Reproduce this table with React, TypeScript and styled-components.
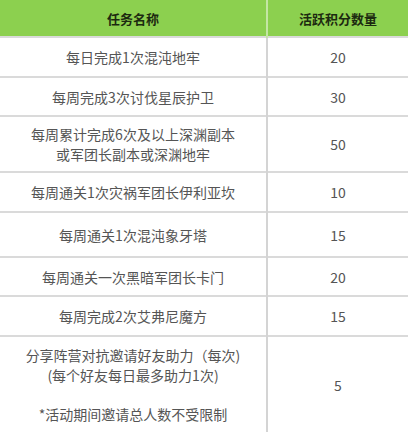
import React from 'react';
import styled, { createGlobalStyle } from 'styled-components';

const GlobalStyle = createGlobalStyle`
  html, body {
    margin: 0;
    padding: 0;
    background: #ffffff;
  }
  body {
    font-family: "Noto Sans CJK SC", "Noto Sans", sans-serif;
  }
`;

const Table = styled.table`
  width: 408px;
  border-collapse: collapse;
  table-layout: fixed;
`;

const HeadCell = styled.th`
  height: 36px;
  padding: 0;
  background: #8cd04f;
  color: #1c2a10;
  font-size: 13px;
  font-weight: 700;
  text-align: center;
  vertical-align: middle;
  border-right: 2px solid #c4e6a4;

  &:last-child {
    border-right: none;
  }
`;

const Row = styled.tr`
  border-top: 2px solid #dadada;
`;

const Cell = styled.td<{ $h?: number }>`
  height: ${(p) => p.$h ?? 40}px;
  padding: 7px 6px;
  box-sizing: border-box;
  color: #555555;
  font-size: 14px;
  line-height: 20px;
  text-align: center;
  vertical-align: middle;
  border-right: 2px solid #d4d4d4;

  &:last-child {
    border-right: none;
  }
`;

const Note = styled.div`
  margin-top: 19px;
`;

interface Task {
  name: React.ReactNode;
  points: number;
  h?: number;
}

const tasks: Task[] = [
  { name: '每日完成1次混沌地牢', points: 20, h: 40 },
  { name: '每周完成3次讨伐星辰护卫', points: 30, h: 39 },
  {
    name: (
      <>
        每周累计完成6次及以上深渊副本
        <br />
        或军团长副本或深渊地牢
      </>
    ),
    points: 50,
    h: 54,
  },
  { name: '每周通关1次灾祸军团长伊利亚坎', points: 10, h: 40 },
  { name: '每周通关1次混沌象牙塔', points: 15, h: 45 },
  { name: '每周通关一次黑暗军团长卡门', points: 20, h: 39 },
  { name: '每周完成2次艾弗尼魔方', points: 15, h: 40 },
  {
    name: (
      <>
        分享阵营对抗邀请好友助力（每次)
        <br />
        (每个好友每日最多助力1次)
        <Note>*活动期间邀请总人数不受限制</Note>
      </>
    ),
    points: 5,
    h: 96,
  },
];

const App: React.FC = () => {
  return (
    <>
      <GlobalStyle />
      <Table>
        <colgroup>
          <col style={{ width: 267 }} />
          <col />
        </colgroup>
        <thead>
          <tr>
            <HeadCell>任务名称</HeadCell>
            <HeadCell>活跃积分数量</HeadCell>
          </tr>
        </thead>
        <tbody>
          {tasks.map((t, i) => (
            <Row key={i}>
              <Cell $h={t.h}>{t.name}</Cell>
              <Cell $h={t.h}>{t.points}</Cell>
            </Row>
          ))}
        </tbody>
      </Table>
    </>
  );
};

export default App;
